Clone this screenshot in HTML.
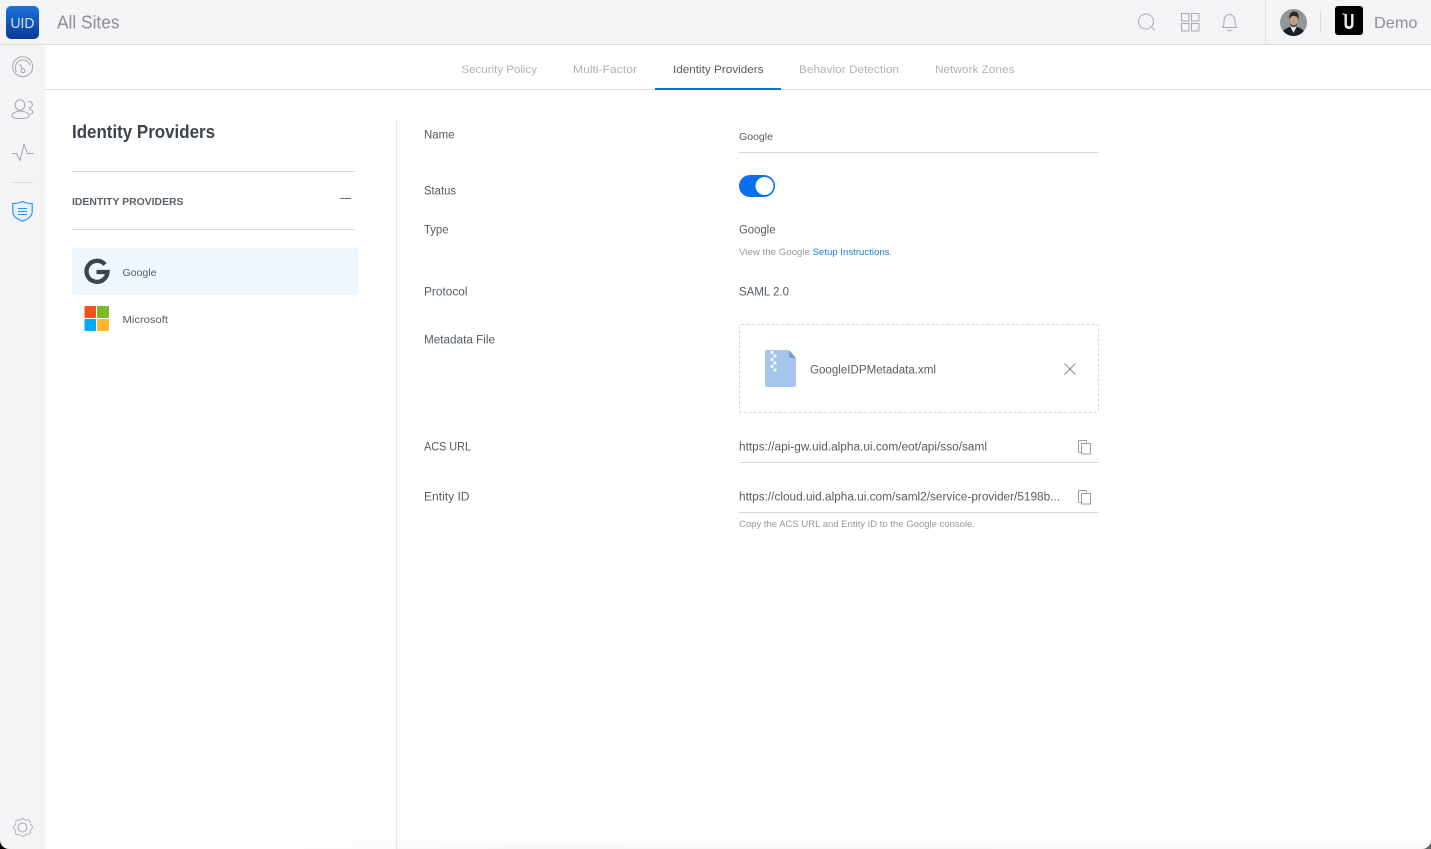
<!DOCTYPE html>
<html lang="en"><head><meta charset="utf-8"><title>Identity Providers</title>
<style>
html,body{margin:0;padding:0;width:1431px;height:849px;overflow:hidden;background:#fff}
svg{display:block}
text{font-family:"Liberation Sans",sans-serif;fill:#565c64}
.ic{fill:none;stroke:#a3a7ae;stroke-width:1}
</style></head><body>
<svg width="1431" height="849" viewBox="0 0 1431 849" xmlns="http://www.w3.org/2000/svg">
<defs>
<linearGradient id="uid" x1="0" y1="0" x2="0" y2="1"><stop offset="0" stop-color="#1c74d8"/><stop offset="1" stop-color="#0a3a98"/></linearGradient>
<linearGradient id="botH" x1="0" y1="0" x2="1" y2="0"><stop offset="0" stop-color="#fff"/><stop offset=".25" stop-color="#f8f8f9"/><stop offset="1" stop-color="#f9f9fa"/></linearGradient>
<linearGradient id="botV" x1="0" y1="0" x2="0" y2="1"><stop offset="0" stop-color="#fff"/><stop offset="1" stop-color="#fff" stop-opacity="0"/></linearGradient>
<clipPath id="av"><circle cx="1293.5" cy="22.5" r="13.5"/></clipPath>
</defs>
<rect width="1431" height="849" fill="#fff"/>
<rect x="200" y="835" width="1231" height="14" fill="url(#botH)"/>
<rect x="200" y="835" width="1231" height="14" fill="url(#botV)"/>
<rect width="1431" height="44" fill="#f4f4f7"/>
<rect width="45" height="849" fill="#f4f4f7"/>
<rect y="44" width="1431" height="1" fill="#d9dadd"/>
<rect x="45" y="89" width="1386" height="1" fill="#dcdde0"/>
<rect x="1265" width="1" height="44" fill="#dfe0e3"/>
<rect x="396" y="120" width="1" height="729" fill="#e6e7e9"/>
<path d="M0 840V849H9A9 9 0 0 1 0 840Z" fill="#000"/>
<path d="M1431 840V849H1422A9 9 0 0 0 1431 840Z" fill="#666"/>

<!-- logo -->
<rect x="6" y="6" width="33" height="33" rx="5" fill="url(#uid)"/>
<text x="10.500" y="28" font-size="15" textLength="24" lengthAdjust="spacingAndGlyphs" style="fill:#cfe2fa">UID</text>
<text x="57" y="28.500" font-size="18" textLength="62.500" lengthAdjust="spacingAndGlyphs" style="fill:#8a8f98">All Sites</text>

<!-- header icons -->
<g class="ic" style="stroke:#a6aab1">
<circle cx="1146" cy="21.500" r="7.500"/><path d="M1151.500 27 L1154.500 30"/>
<rect x="1181.500" y="13.500" width="7.500" height="7.500"/><rect x="1191.500" y="13.500" width="7.500" height="7.500"/>
<rect x="1181.500" y="23.500" width="7.500" height="7.500"/><rect x="1191.500" y="23.500" width="7.500" height="7.500"/>
<path d="M1222.500 27.500c1.500-1.800 1.500-3.500 1.500-6.500 0-3.500 2-6.500 5.500-6.500s5.500 3 5.500 6.500c0 3 0 4.700 1.500 6.500Z"/><path d="M1227.500 30c.7.800 3.300.8 4 0"/>
</g>

<!-- avatar -->
<g clip-path="url(#av)">
<rect x="1280" y="9" width="27" height="27" fill="#8f9897"/>
<path d="M1282 36c0-6 4-8 8-9h7c4 1 8 3 8 9Z" fill="#18202c"/>
<path d="M1290.500 27l3 6 3-6Z" fill="#e3e5e7"/>
<ellipse cx="1293.800" cy="20" rx="4" ry="6" fill="#c39f8a"/>
<path d="M1289.500 20c-1-6 1.500-8.500 4.800-8.500s5.200 2.500 4 8.500c-.6-3-2-4-4.500-4s-3.700 1-4.300 4Z" fill="#2e2622"/>
<path d="M1290.500 23c1 3 5.500 3 6.600 0v2.500l-3.300 1.700-3.300-1.700Z" fill="#54443a"/>
</g>
<rect x="1320" y="11" width="1" height="22" fill="#d8d9dc"/>
<rect x="1335" y="6" width="28" height="29" rx="3" fill="#000"/>
<path d="M1344.500 14v10.500c0 3 2 4.500 4.500 4.500s4.500-1.500 4.500-4.500V14h-2.400v10c0 1.600-.8 2.400-2.100 2.400s-2.100-.8-2.100-2.400V14Z" fill="#ececec"/>
<rect x="1342.500" y="13" width="2" height="2" fill="#888"/>
<text x="1374" y="28" font-size="16" textLength="43.500" lengthAdjust="spacingAndGlyphs" style="fill:#8a8f98">Demo</text>

<!-- sidebar icons -->
<g class="ic">
<circle cx="22.700" cy="66.700" r="10"/>
<path d="M16.500 72a7 7 0 0 1-1-5.300 7.300 7.300 0 0 1 14.400-1.200"/>
<circle cx="23" cy="70.800" r="2"/><path d="M22.200 69 L20 64"/>
<ellipse cx="20" cy="105" rx="4.800" ry="5.300"/>
<path d="M20.500 118.500c-5 0-8.500-1-8.500-3s4-4.500 8.500-4.500 8.500 2.500 8.500 4.500-3.500 3-8.500 3Z"/>
<path d="M27.500 102a3.200 3.200 0 1 1 1 5.800M29 109c2 .3 3.800 1.700 3.800 3.200 0 1-1 1.700-2.800 2"/>
<path d="M12 153.500h4.500l3.500 7 4-16 3.500 9h6"/>
</g>
<rect x="12" y="182" width="21" height="1" fill="#d9dadd"/>
<g fill="none" stroke="#2a8fe8" stroke-width="1.100">
<path d="M22.500 201.500c3 1.400 6.200 2 9.700 2v8.500c0 4.300-3.900 7-9.700 9.200-5.800-2.200-9.700-4.900-9.700-9.200v-8.500c3.500 0 6.700-.6 9.700-2Z" fill="#e6f1fb"/>
<path d="M18 208.500h9M18 211.500h9M18 214.500h9"/>
</g>
<g class="ic">
<path d="M22.500 817.500c1.500 0 2 1.500 3.300 1.700 1.300.2 2.500-.8 3.700.1 1.100.9.400 2.300.9 3.500s2 1.600 2.100 3.100-1.400 2-1.800 3.200.3 2.600-.7 3.600-2.500.3-3.700.7-1.700 1.900-3.200 2-2.300-1.200-3.500-1.600-2.600.4-3.600-.6-.2-2.400-.6-3.700-1.900-1.700-1.900-3.300 1.400-1.900 2-3.100-.2-2.500.8-3.500 2.400-.1 3.600-.4 1.100-1.700 2.600-1.700Z" stroke-dasharray="2.200 .6" transform="translate(0 1)"/>
<circle cx="22.500" cy="827.500" r="4.500"/>
</g>

<!-- tabs -->
<text x="461.500" y="73" font-size="11" textLength="75.500" lengthAdjust="spacingAndGlyphs" style="fill:#aeb2b8">Security Policy</text>
<text x="573" y="73" font-size="11" textLength="64" lengthAdjust="spacingAndGlyphs" style="fill:#aeb2b8">Multi-Factor</text>
<text x="673" y="73" font-size="11" textLength="90.500" lengthAdjust="spacingAndGlyphs" style="fill:#565c64">Identity Providers</text>
<text x="799" y="73" font-size="11" textLength="100" lengthAdjust="spacingAndGlyphs" style="fill:#aeb2b8">Behavior Detection</text>
<text x="935" y="73" font-size="11" textLength="79.500" lengthAdjust="spacingAndGlyphs" style="fill:#aeb2b8">Network Zones</text>
<rect x="655" y="88" width="126" height="2" fill="#0a6fe0"/>

<!-- left panel -->
<text x="72" y="138" font-size="18.500" font-weight="700" textLength="143" lengthAdjust="spacingAndGlyphs" style="fill:#3f444c">Identity Providers</text>
<rect x="72" y="171" width="283" height="1" fill="#d9dadd"/>
<text x="72" y="205" font-size="10.500" font-weight="700" textLength="111.500" lengthAdjust="spacingAndGlyphs" style="fill:#5a6068">IDENTITY PROVIDERS</text>
<rect x="340" y="198" width="11" height="1" fill="#6a6f77"/>
<rect x="72" y="229" width="283" height="1" fill="#d9dadd"/>
<rect x="72" y="248" width="286" height="47" rx="3" fill="#eef6fe"/>
<path d="M105 264.500a10.500 10.500 0 1 0 2.500 7.500H96.500" fill="none" stroke="#3c444e" stroke-width="4.300"/>
<text x="122.500" y="276" font-size="10.500" textLength="34" lengthAdjust="spacingAndGlyphs">Google</text>
<rect x="84.500" y="306" width="11.500" height="12" rx="1" fill="#f4511e"/>
<rect x="97" y="306" width="12" height="12" rx="1" fill="#7cb82f"/>
<rect x="84.500" y="319" width="11.500" height="12" rx="1" fill="#03a9f4"/>
<rect x="97" y="319" width="12" height="12" rx="1" fill="#ffb92c"/>
<text x="122.500" y="323" font-size="10.500" textLength="45.500" lengthAdjust="spacingAndGlyphs">Microsoft</text>

<!-- labels -->
<g font-size="11.500">
<text x="424" y="138.500" textLength="30.500" lengthAdjust="spacingAndGlyphs">Name</text>
<text x="424" y="194.500" textLength="32" lengthAdjust="spacingAndGlyphs">Status</text>
<text x="424" y="233.500" textLength="24.500" lengthAdjust="spacingAndGlyphs">Type</text>
<text x="424" y="295.500" textLength="43.500" lengthAdjust="spacingAndGlyphs">Protocol</text>
<text x="424" y="343.500" textLength="71" lengthAdjust="spacingAndGlyphs">Metadata File</text>
<text x="424" y="450.500" textLength="47" lengthAdjust="spacingAndGlyphs">ACS URL</text>
<text x="424" y="500.500" textLength="45.500" lengthAdjust="spacingAndGlyphs">Entity ID</text>
</g>

<!-- fields -->
<text x="739" y="140" font-size="10.500" textLength="34" lengthAdjust="spacingAndGlyphs">Google</text>
<rect x="739" y="152" width="360" height="1" fill="#d9dadd"/>
<rect x="739" y="175" width="36" height="22" rx="11" fill="#0a6fee"/>
<circle cx="764.500" cy="186" r="9" fill="#fff"/>
<text x="739" y="233.500" font-size="11.500" textLength="36.500" lengthAdjust="spacingAndGlyphs">Google</text>
<text x="739" y="255" font-size="9.500" textLength="71" lengthAdjust="spacingAndGlyphs" style="fill:#94989f">View the Google</text>
<text x="812.500" y="255" font-size="9.500" textLength="77" lengthAdjust="spacingAndGlyphs" style="fill:#1a7edc">Setup Instructions</text>
<text x="889.500" y="255" font-size="9.500" style="fill:#94989f">.</text>
<text x="739" y="295.500" font-size="11.500" textLength="50" lengthAdjust="spacingAndGlyphs">SAML 2.0</text>

<rect x="739.500" y="324.500" width="359" height="88" rx="2" fill="none" stroke="#d4d6da" stroke-dasharray="3 2"/>
<path d="M767 350h21l8 8v27a2 2 0 0 1-2 2h-27a2 2 0 0 1-2-2v-33a2 2 0 0 1 2-2Z" fill="#a3c6ea"/>
<path d="M789 350l7 8h-5.500a1.500 1.500 0 0 1-1.500-1.500Z" fill="#6e9fd6"/>
<g fill="#fff"><rect x="770.500" y="351" width="3" height="3" opacity=".85"/><rect x="773.500" y="354.500" width="3" height="3" opacity=".85"/><rect x="770.500" y="358" width="3" height="3" opacity=".85"/><rect x="773.500" y="361.500" width="3" height="3" opacity=".85"/><rect x="770.500" y="365" width="3" height="3" opacity=".85"/><rect x="773.500" y="368.500" width="3" height="3" opacity=".85"/></g>
<text x="810" y="373.500" font-size="11.500" textLength="126" lengthAdjust="spacingAndGlyphs">GoogleIDPMetadata.xml</text>
<path d="M1064.500 363.500l11 11M1075.500 363.500l-11 11" fill="none" stroke="#85898f" stroke-width="1"/>

<text x="739" y="450.500" font-size="11.500" textLength="248" lengthAdjust="spacingAndGlyphs">https://api-gw.uid.alpha.ui.com/eot/api/sso/saml</text>
<rect x="739" y="462" width="360" height="1" fill="#d9dadd"/>
<text x="739" y="500.500" font-size="11.500" textLength="321" lengthAdjust="spacingAndGlyphs">https://cloud.uid.alpha.ui.com/saml2/service-provider/5198b...</text>
<rect x="739" y="512" width="360" height="1" fill="#d9dadd"/>
<text x="739" y="527" font-size="9.500" textLength="236" lengthAdjust="spacingAndGlyphs" style="fill:#94989f">Copy the ACS URL and Entity ID to the Google console.</text>
<g class="ic" style="stroke:#9a9ea5">
<path d="M1081.500 452.500h-2a1 1 0 0 1-1-1v-10a1 1 0 0 1 1-1h7v2"/><rect x="1081.500" y="443.500" width="9" height="10.500"/>
<path d="M1081.500 502.500h-2a1 1 0 0 1-1-1v-10a1 1 0 0 1 1-1h7v2"/><rect x="1081.500" y="493.500" width="9" height="10.500"/>
</g>
</svg>
</body></html>
